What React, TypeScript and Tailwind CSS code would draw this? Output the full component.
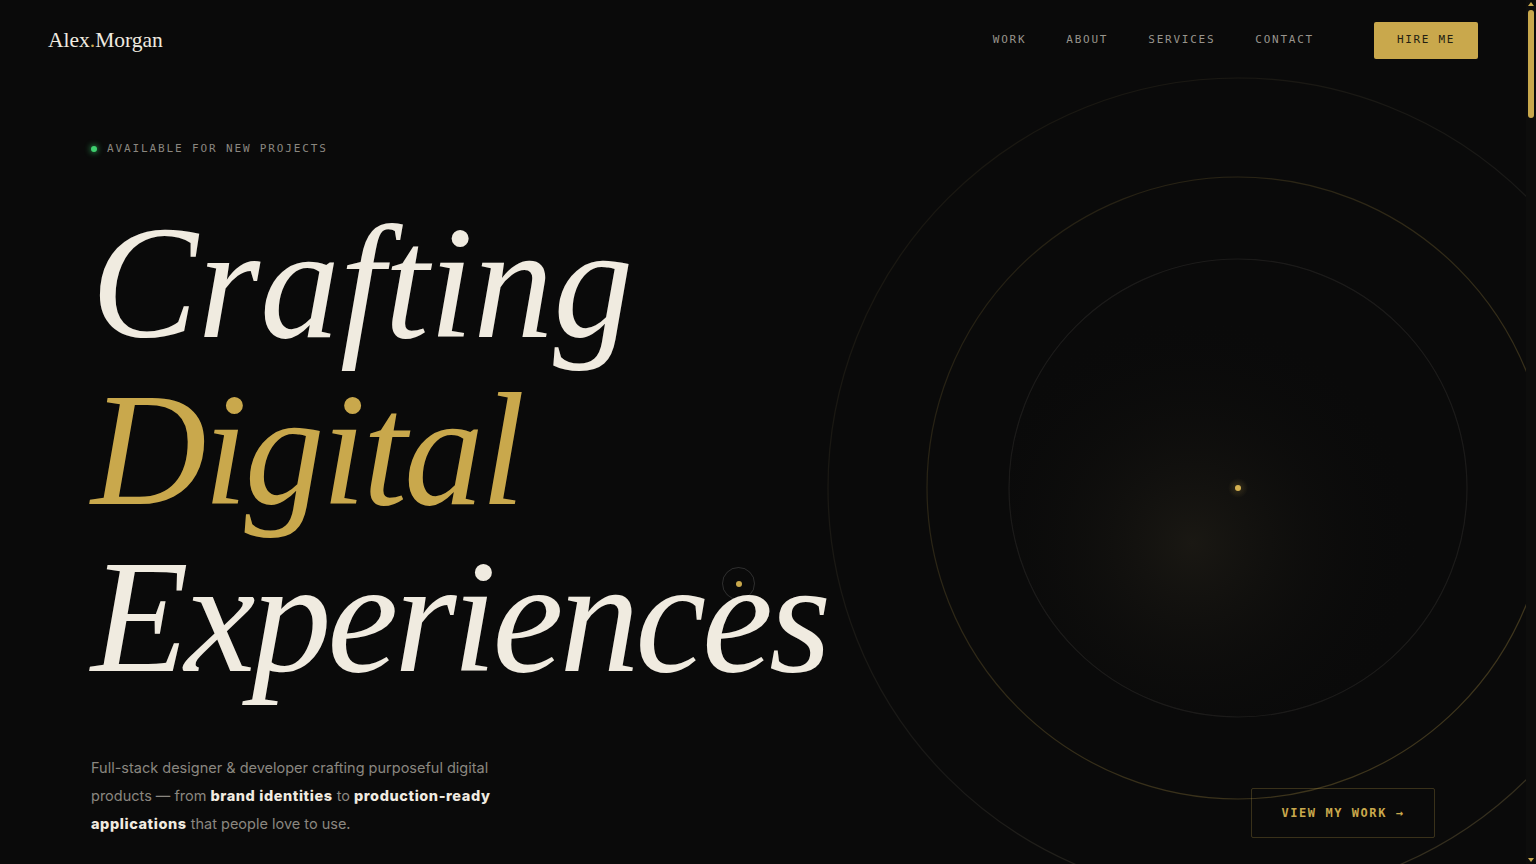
import type { FC } from "react";

const mono = "font-['DejaVu_Sans_Mono','Liberation_Mono',monospace]";
const serif = "font-['Liberation_Serif','DejaVu_Serif',serif]";

const navItems = ["Work", "About", "Services", "Contact"];

const Header: FC = () => (
  <header className="flex h-[81px] items-center justify-between px-12">
    <a className={`${serif} text-[21.5px] leading-none text-[#f0ebe0]`}>
      Alex<span className="text-[#c9a84c]">.</span>Morgan
    </a>
    <div className="flex items-center">
      <nav className={`${mono} flex items-center gap-[40px] text-[11px] uppercase tracking-[0.16em] text-[#98948c]`}>
        {navItems.map((item) => (
          <a key={item}>{item}</a>
        ))}
      </nav>
      <button
        className={`${mono} ml-[60px] flex h-[37px] w-[104px] items-center justify-center rounded-[2px] bg-[#c9a84c] text-[11px] font-medium uppercase tracking-[0.15em] text-[#231e12]`}
      >
        Hire me
      </button>
    </div>
  </header>
);

const Rings: FC = () => (
  <svg
    className="pointer-events-none absolute left-[826px] top-[76px] h-[824px] w-[824px]"
    viewBox="0 0 824 824"
    fill="none"
  >
    <defs>
      <radialGradient id="glow" cx="0.4" cy="0.62" r="0.5">
        <stop offset="0" stopColor="#1a1813" />
        <stop offset="1" stopColor="#0a0a0a" stopOpacity="0" />
      </radialGradient>
      <radialGradient id="dot" cx="0.5" cy="0.5" r="0.5">
        <stop offset="0" stopColor="#c9a84c" stopOpacity="0.2" />
        <stop offset="1" stopColor="#c9a84c" stopOpacity="0" />
      </radialGradient>
      <linearGradient id="ringA" x1="0" y1="0" x2="1" y2="1">
        <stop offset="0" stopColor="#c9a84c" stopOpacity="0.08" />
        <stop offset="0.5" stopColor="#8f8a7c" stopOpacity="0.12" />
        <stop offset="1" stopColor="#c9a84c" stopOpacity="0.3" />
      </linearGradient>
      <linearGradient id="ringB" x1="0" y1="0" x2="1" y2="1">
        <stop offset="0" stopColor="#c9a84c" stopOpacity="0.12" />
        <stop offset="1" stopColor="#c9a84c" stopOpacity="0.3" />
      </linearGradient>
    </defs>
    <circle cx="412" cy="412" r="229" fill="url(#glow)" />
    <circle cx="412" cy="412" r="410" stroke="url(#ringA)" strokeWidth="1.2" />
    <circle cx="412" cy="412" r="311" stroke="url(#ringB)" strokeWidth="1.2" />
    <circle cx="412" cy="412" r="229" stroke="#b8b2a2" strokeOpacity="0.1" strokeWidth="1.2" />
    <circle cx="412" cy="412" r="10" fill="url(#dot)" />
    <circle cx="412" cy="412" r="3" fill="#d4b050" />
  </svg>
);

const Hero: FC = () => (
  <section className="px-[91px]">
    <div className={`${mono} mt-[60px] flex h-4 items-center gap-[10px] text-[11px] uppercase tracking-[0.17em] text-[#8a8780]`}>
      <span className="h-[6px] w-[6px] rounded-full bg-[#3ecf6e] shadow-[0_0_6px_#3ecf6e]" />
      Available for new projects
    </div>

    <h1 className={`${serif} mt-[43px] text-[160px] font-normal italic leading-[167px] text-[#f0ebe0]`}>
      <span className="block">Crafting</span>
      <span className="block tracking-[-0.02em] text-[#c9a84c]">Digital</span>
      <span className="block tracking-[-0.026em]">Experiences</span>
    </h1>

    <div className="mt-[53px] flex items-end justify-between">
      <p className="max-w-[425px] font-['Inter','Noto_Sans',sans-serif] text-[14.5px] leading-[28px] text-[#8a8780]">
        Full-stack designer &amp; developer crafting purposeful digital products — from{" "}
        <strong className="font-extrabold tracking-[0.04em] text-[#f0ebe0]">brand identities</strong> to{" "}
        <strong className="font-extrabold tracking-[0.04em] text-[#f0ebe0]">production-ready applications</strong>{" "}
        that people love to use.
      </p>
      <button
        className={`${mono} flex h-[50px] w-[184px] items-center justify-center rounded-[2px] border border-[#c9a84c]/25 text-[12px] font-bold uppercase tracking-[0.13em] text-[#c9a84c]`}
      >
        View my work →
      </button>
    </div>
  </section>
);

const Cursor: FC = () => (
  <div className="pointer-events-none absolute left-[722px] top-[567px] flex h-[33px] w-[33px] items-center justify-center rounded-full border border-white/15">
    <span className="h-[6px] w-[6px] rounded-full bg-[#c9a84c]" />
  </div>
);

const ScrollRail: FC = () => (
  <aside className="flex w-[10px] flex-col items-center bg-[#0d0d0c] pt-[2px] pb-[2px]">
    <span className="h-0 w-0 border-x-[3px] border-b-[4px] border-x-transparent border-b-[#c9a84c]" />
    <span className="mt-[4px] h-[108px] w-[6px] rounded-full bg-[#c9a84c]" />
    <span className="flex-1" />
    <span className="h-0 w-0 border-x-[3px] border-t-[4px] border-x-transparent border-t-[#c9a84c]" />
  </aside>
);

export default function App() {
  return (
    <div className="flex h-screen bg-[#0a0a0a]">
      <main className="flex-1 overflow-y-auto overflow-x-hidden [scrollbar-width:none]">
        <div className="relative min-h-[864px] overflow-hidden pb-[40px]">
          <Rings />
          <div className="relative">
            <Header />
            <Hero />
          </div>
          <Cursor />
        </div>
        <section className="h-[4700px]" />
      </main>
      <ScrollRail />
    </div>
  );
}
